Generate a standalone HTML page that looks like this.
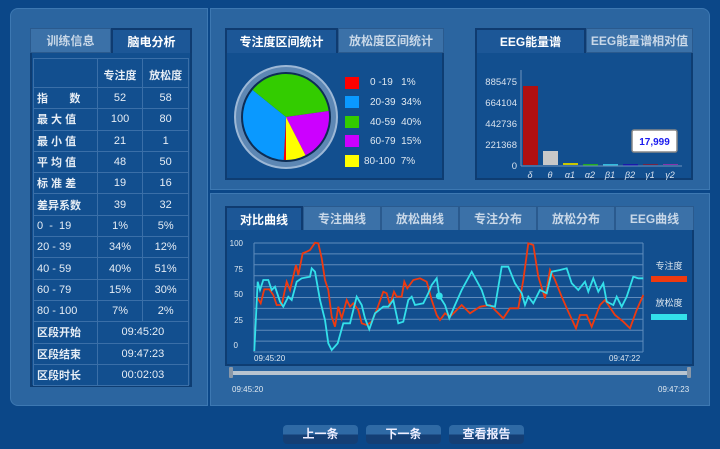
<!DOCTYPE html>
<html><head><meta charset="utf-8"><style>
*{margin:0;padding:0;box-sizing:border-box}
body{width:720px;height:449px;background:#0b4788;font-family:"Liberation Sans","Noto Sans CJK SC",sans-serif;color:#e2eaf2;position:relative;overflow:hidden}
.a{position:absolute}
.panel{position:absolute;background:#2b65a0;border:1px solid #3d78b2}
.tab{position:absolute;height:25px;line-height:25px;text-align:center;font-size:12px;font-weight:bold;color:#c9d8e8;background:#3b71a8;border:1px solid #2a5a8e}
.tab.on{background:#1c5797;color:#fff;border:2px solid #0f3b70;border-bottom:none}
.box{position:absolute;background:#124f8f;border:2px solid #0e3d72;border-top:none}
table{border-collapse:collapse;position:absolute;left:33px;top:58px;width:156px}
td{border:1px solid #3a6fa8;height:21.3px;font-size:11px;text-align:center;color:#e6edf5}
td.l{text-align:left;padding-left:3px;font-weight:bold}
.btn{position:absolute;top:425px;width:75px;height:19px;border-radius:4px;background:linear-gradient(#2f6aa5 0,#2f6aa5 50%,#143f75 50%,#143f75 100%);font-size:12px;font-weight:bold;text-align:center;line-height:19px;color:#eef}
.sq{position:absolute;left:345px;width:14px;height:12px}
.lg{position:absolute;left:370px;font-size:10px;color:#dfe8f0}
</style></head><body>
<!-- left panel -->
<div class="panel" style="left:10px;top:8px;width:198px;height:398px;border-radius:8px 0 0 8px"></div>
<div class="panel" style="left:210px;top:8px;width:500px;height:182px;border-radius:0 8px 0 0"></div>
<div class="panel" style="left:210px;top:193px;width:500px;height:213px"></div>

<div class="tab" style="left:30px;top:28px;width:81px">训练信息</div>
<div class="tab on" style="left:111px;top:28px;width:81px;height:26px;background:#1c5797">脑电分析</div>
<div class="box" style="left:30px;top:53px;width:162px;height:334px"></div>
<table>
<tr><td style="height:29px;width:64px"></td><td style="width:46px;font-weight:bold;vertical-align:bottom;padding-bottom:4px">专注度</td><td style="width:46px;font-weight:bold;vertical-align:bottom;padding-bottom:4px">放松度</td></tr>
<tr><td class="l">指&nbsp;&nbsp;&nbsp;&nbsp;&nbsp;&nbsp;&nbsp;数</td><td>52</td><td>58</td></tr>
<tr><td class="l">最 大 值</td><td>100</td><td>80</td></tr>
<tr><td class="l">最 小 值</td><td>21</td><td>1</td></tr>
<tr><td class="l">平 均 值</td><td>48</td><td>50</td></tr>
<tr><td class="l">标 准 差</td><td>19</td><td>16</td></tr>
<tr><td class="l">差异系数</td><td>39</td><td>32</td></tr>
<tr><td class="l" style="font-weight:normal">0&nbsp; - &nbsp;19</td><td>1%</td><td>5%</td></tr>
<tr><td class="l" style="font-weight:normal">20 - 39</td><td>34%</td><td>12%</td></tr>
<tr><td class="l" style="font-weight:normal">40 - 59</td><td>40%</td><td>51%</td></tr>
<tr><td class="l" style="font-weight:normal">60 - 79</td><td>15%</td><td>30%</td></tr>
<tr><td class="l" style="font-weight:normal">80 - 100</td><td>7%</td><td>2%</td></tr>
<tr><td class="l">区段开始</td><td colspan="2">09:45:20</td></tr>
<tr><td class="l">区段结束</td><td colspan="2">09:47:23</td></tr>
<tr><td class="l">区段时长</td><td colspan="2">00:02:03</td></tr>
</table>

<!-- pie panel -->
<div class="tab on" style="left:225px;top:28px;width:113px;height:26px">专注度区间统计</div>
<div class="tab" style="left:338px;top:28px;width:106px;height:25px">放松度区间统计</div>
<div class="box" style="left:225px;top:53px;width:219px;height:127px"></div>
<svg class="a" style="left:0;top:0" width="720" height="449">
<circle cx="286" cy="117" r="51" fill="#5d87b4" stroke="#9db8d6" stroke-width="2"/>
<circle cx="286" cy="117" r="45" fill="#0d2d55"/>
<path d="M286 117 L286 160 A43 43 0 0 1 283.75 159.94 Z" fill="#ff0000"/>
<path d="M286 117 L283.75 159.94 A43 43 0 0 1 252.6 89.94 Z" fill="#0a99ff"/>
<path d="M286 117 L252.6 89.94 A43 43 0 0 1 328.6 111 Z" fill="#33cc00"/>
<path d="M286 117 L328.6 111 A43 43 0 0 1 305.5 155.3 Z" fill="#cc00ff"/>
<path d="M286 117 L305.5 155.3 A43 43 0 0 1 286 160 Z" fill="#ffff00"/>
</svg>
<div class="sq" style="top:77px;background:#f00"></div><div class="lg" style="top:77px">0 -19&nbsp;&nbsp; 1%</div>
<div class="sq" style="top:96px;background:#0a99ff"></div><div class="lg" style="top:97px">20-39&nbsp; 34%</div>
<div class="sq" style="top:116px;background:#33cc00"></div><div class="lg" style="top:117px">40-59&nbsp; 40%</div>
<div class="sq" style="top:135px;background:#cc00ff"></div><div class="lg" style="top:136px">60-79&nbsp; 15%</div>
<div class="sq" style="top:155px;background:#ff0"></div><div class="lg" style="top:156px;left:364px">80-100&nbsp; 7%</div>

<!-- EEG panel -->
<div class="tab on" style="left:475px;top:28px;width:111px;height:26px">EEG能量谱</div>
<div class="tab" style="left:586px;top:28px;width:107px;height:25px">EEG能量谱相对值</div>
<div class="box" style="left:475px;top:53px;width:218px;height:127px"></div>
<div class="a" style="left:481px;top:72px;font-size:9.5px;line-height:21px;text-align:right;width:36px;color:#d8e2ee">885475<br>664104<br>442736<br>221368<br>0</div>
<svg class="a" style="left:0;top:0" width="720" height="449">
<line x1="521" y1="70" x2="521" y2="166" stroke="#6f93bd"/>
<line x1="521" y1="166" x2="682" y2="166" stroke="#6f93bd"/>
<rect x="523" y="86" width="15" height="79" fill="#b01010"/>
<rect x="543" y="151" width="15" height="14" fill="#c8c8c8"/>
<rect x="563" y="163" width="15" height="2" fill="#c8c800"/>
<rect x="583" y="164" width="15" height="1.5" fill="#22aa22"/>
<rect x="603" y="164" width="15" height="1.5" fill="#33bbdd"/>
<rect x="623" y="164" width="15" height="1.5" fill="#1a1aaa"/>
<rect x="643" y="164" width="15" height="1" fill="#772244"/>
<rect x="663" y="164" width="15" height="1" fill="#8833aa"/>
<g font-size="9" fill="#d8e2ee" font-style="italic" font-family="Liberation Sans,sans-serif" text-anchor="middle">
<text x="530" y="178">δ</text><text x="550" y="178">θ</text><text x="570" y="178">α1</text><text x="590" y="178">α2</text><text x="610" y="178">β1</text><text x="630" y="178">β2</text><text x="650" y="178">γ1</text><text x="670" y="178">γ2</text></g>
<rect x="632" y="130" width="45" height="22" rx="2" fill="#fff" stroke="#888" stroke-width="1.5"/>
<text x="654.5" y="145" font-size="10" font-weight="bold" fill="#1a1aee" text-anchor="middle" font-family="Liberation Sans,sans-serif">17,999</text>
</svg>

<!-- bottom chart -->
<div class="tab on" style="left:225px;top:206px;width:78px;height:25px">对比曲线</div>
<div class="tab" style="left:303px;top:206px;width:78px">专注曲线</div>
<div class="tab" style="left:381px;top:206px;width:78px">放松曲线</div>
<div class="tab" style="left:459px;top:206px;width:78px">专注分布</div>
<div class="tab" style="left:537px;top:206px;width:78px">放松分布</div>
<div class="tab" style="left:615px;top:206px;width:79px">EEG曲线</div>
<div class="box" style="left:225px;top:230px;width:469px;height:136px"></div>
<svg class="a" style="left:0;top:0" width="720" height="449" font-family="Liberation Sans,sans-serif">
<g stroke="#5f8cbc" stroke-width="1">
<line x1="254" y1="243" x2="643" y2="243"/><line x1="254" y1="253.9" x2="643" y2="253.9"/><line x1="254" y1="264.8" x2="643" y2="264.8"/><line x1="254" y1="275.7" x2="643" y2="275.7"/><line x1="254" y1="286.6" x2="643" y2="286.6"/><line x1="254" y1="297.5" x2="643" y2="297.5"/><line x1="254" y1="308.4" x2="643" y2="308.4"/><line x1="254" y1="319.3" x2="643" y2="319.3"/><line x1="254" y1="330.2" x2="643" y2="330.2"/><line x1="254" y1="341.1" x2="643" y2="341.1"/><line x1="254" y1="352" x2="643" y2="352"/>
<line x1="254" y1="243" x2="254" y2="352"/><line x1="643" y1="243" x2="643" y2="352"/></g>
<g font-size="8" fill="#dfe8f0" text-anchor="end"><text x="243" y="246">100</text><text x="243" y="272">75</text><text x="243" y="297">50</text><text x="243" y="323">25</text><text x="238" y="348">0</text></g>
<g font-size="8" fill="#dfe8f0"><text x="254" y="361">09:45:20</text><text x="609" y="361">09:47:22</text><text x="232" y="392">09:45:20</text><text x="658" y="392">09:47:23</text></g>
<polyline fill="none" stroke="#ee3a10" stroke-width="1.8" points="256.7,296.7 260.7,303.3 264.3,289.3 269.3,289.3 273.3,295 276.7,305 281.7,305 286.7,281.7 290,290 296,265 298.3,275 302.7,253.3 306.7,251.7 310,250 315,242.7 318.3,243.3 321.7,258.3 325,280 328.3,290 331.7,316.7 335,326.7 338.3,306.7 341.7,318.3 346.7,300 350,306.7 353.3,303.3 358.3,310 361.7,323.3 366.7,325 371.7,321.7 376.7,310 383.3,291.7 386.7,293.3 390,305 394,291.7 396.7,296.7 401.7,296.7 404.3,281.7 407.3,288.3 413.3,280 420,278.3 426.7,281.7 431.7,300 436.7,315 440,320 445,313.3 450,316.7 455,311.7 461.7,305 470,313.3 480,306.7 490,305 503.3,318.3 510,308.3 518.3,308.3 523.3,280 528.3,243.3 533.3,245 538.3,276.7 545,298.3 550,270 555,280 561.7,296.7 568.3,311.7 576,328.3 580,315 586.7,315 591.7,326.7 600,305 605,300 615,315 623.3,321.7 630,328.3 636.7,310 643.3,295"/>
<polyline fill="none" stroke="#33e0ea" stroke-width="1.8" points="254.3,351 257.7,281.7 260,290 263.3,280 268.3,280 271.7,290 275,286.7 280,301.7 283.3,306.7 288.3,296.7 291.7,300 296.7,281.7 301.7,278.3 310,276.7 311.7,268.3 315,271.7 320,300 325,320 328.3,343.3 331.7,350 337.7,343.3 343.3,323.3 350,323.3 353.3,310 356.7,296.7 361.7,305 365,318.3 369.3,329.3 375,313.3 383.3,306.7 388.3,306.7 393.3,300 398.3,323.3 403.3,321.7 408.3,300 411.7,296.7 415,305 423.3,303.3 428.3,293.3 431.7,285 436.7,278.3 439.3,296 445,305 449.3,318.3 455,305 461.7,290 471.7,271.7 481.7,290 486.7,305 495,306.7 501.7,266.7 508.3,266.7 515,283.3 521.7,293.3 525,305 528.3,296.7 533.3,303.3 540,290 546.7,293.3 551.7,271.7 560,270 566.7,268.3 571.7,283.3 578.3,290 585,281.7 588.3,291.7 593.3,278.3 598.3,291.7 603.3,283.3 606.7,301.7 613.3,305 616.7,296.7 621.7,306.7 626.7,296.7 633.3,276.7 638.3,278.3 643.3,278.3"/>
<circle cx="439.3" cy="296" r="3.5" fill="#33e0ea"/>
<text x="669" y="269" font-size="9" fill="#dfe8f0" text-anchor="middle">专注度</text>
<rect x="651" y="276" width="36" height="6" fill="#ee3a10"/>
<text x="669" y="306" font-size="9" fill="#dfe8f0" text-anchor="middle">放松度</text>
<rect x="651" y="314" width="36" height="6" fill="#33e0ea"/>
<rect x="230" y="371" width="460" height="4" rx="2" fill="#b8c4d0"/>
<rect x="229" y="367" width="4" height="11" rx="1" fill="#8a98a8"/>
<rect x="687" y="367" width="4" height="11" rx="1" fill="#8a98a8"/>
</svg>

<div class="btn" style="left:283px">上一条</div>
<div class="btn" style="left:366px">下一条</div>
<div class="btn" style="left:449px">查看报告</div>
</body></html>
